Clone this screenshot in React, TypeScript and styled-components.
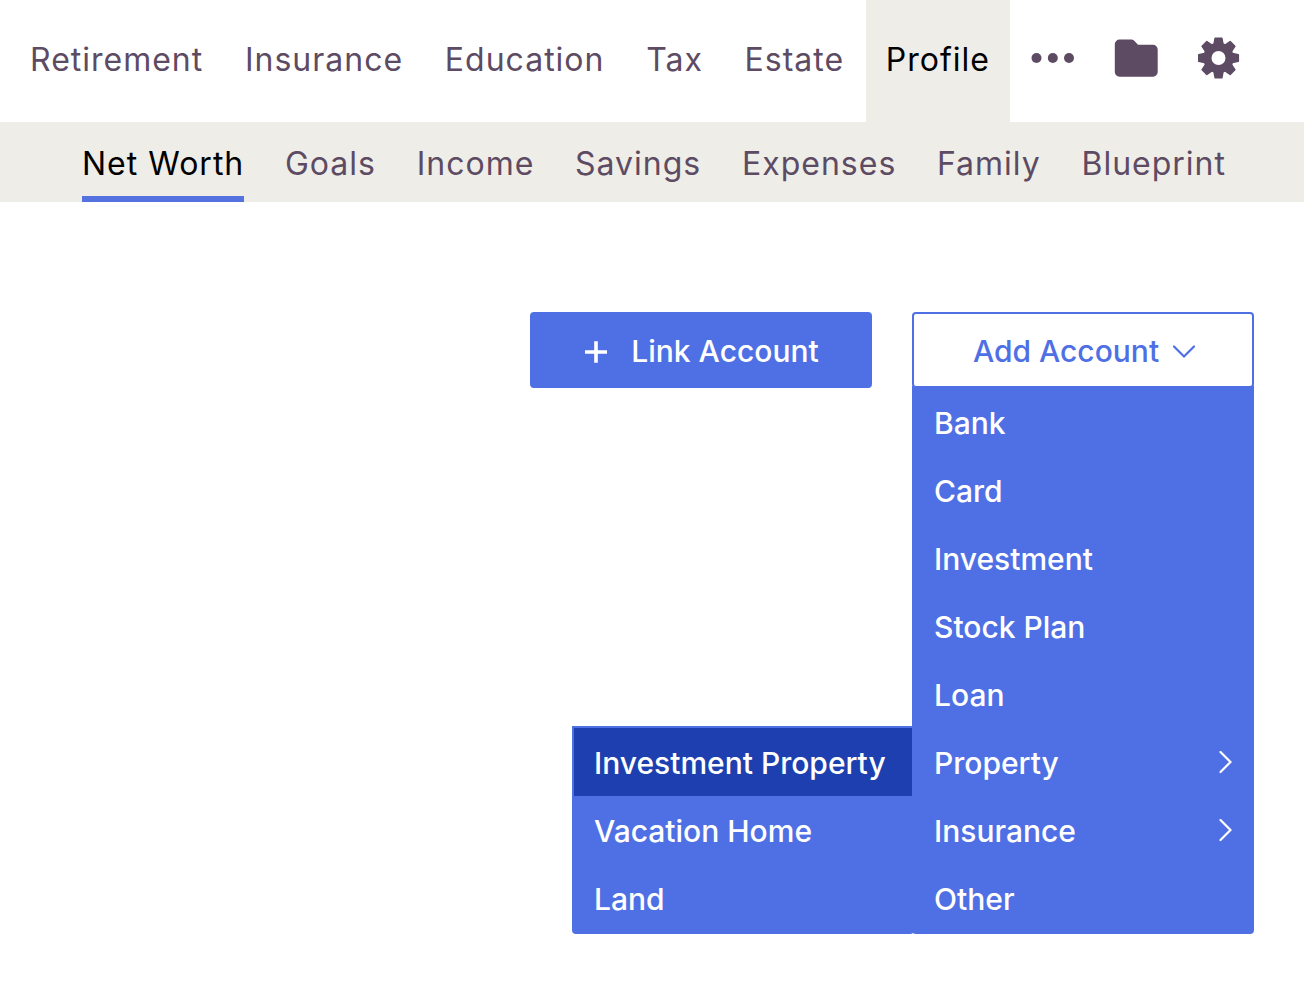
import React from "react";
import styled, { createGlobalStyle } from "styled-components";

const color = {
  plum: "#5d4b63",
  sand: "#eeede8",
  blue: "#4f70e5",
  navy: "#1d3faf",
  underline: "#5573e0",
};

const GlobalStyle = createGlobalStyle`
  *, *::before, *::after { box-sizing: border-box; }
  body {
    margin: 0;
    background: #fff;
    font-family: Inter, "Liberation Sans", Arial, sans-serif;
    font-size: 32px;
    line-height: 40px;
  }
  button { font: inherit; cursor: pointer; }
  ul { list-style: none; margin: 0; padding: 0; }
  svg { display: block; flex: none; }
`;

const PrimaryNav = styled.nav`
  display: flex;
  padding: 0 44px 0 10px;
`;

const PrimaryLinks = styled.div`
  display: flex;
  flex: 1;
  justify-content: space-between;
`;

const PrimaryLink = styled.a<{ $active?: boolean }>`
  padding: 40px 20px 42px;
  letter-spacing: 1px;
  white-space: nowrap;
  text-decoration: none;
  color: ${(p) => (p.$active ? "#000" : color.plum)};
  background: ${(p) => (p.$active ? color.sand : "transparent")};
`;

const NavIconButton = styled.button`
  display: flex;
  align-items: center;
  padding: 0 20px 6px;
  border: 0;
  background: none;
  color: ${color.plum};
`;

const SecondaryNav = styled.nav`
  display: flex;
  justify-content: space-between;
  padding: 0 78px 0 82px;
  background: ${color.sand};
`;

const SecondaryLink = styled.a<{ $active?: boolean }>`
  padding: 22px 0 12px;
  border-bottom: 6px solid ${(p) => (p.$active ? color.underline : "transparent")};
  letter-spacing: 1px;
  white-space: nowrap;
  text-decoration: none;
  color: ${(p) => (p.$active ? "#000" : color.plum)};
`;

const Actions = styled.main`
  display: flex;
  justify-content: flex-end;
  gap: 40px;
  padding: 110px 50px 0;
  min-height: 790px;
  font-size: 30px;
  font-weight: 500;
`;

const ActionButton = styled.button<{ $outlined?: boolean; $gap: number }>`
  display: flex;
  align-items: center;
  justify-content: center;
  gap: ${(p) => p.$gap}px;
  width: 342px;
  height: 76px;
  padding: 2px 0 0 2px;
  border: 2px solid ${color.blue};
  border-radius: 4px;
  white-space: nowrap;
  color: ${(p) => (p.$outlined ? color.blue : "#fff")};
  background: ${(p) => (p.$outlined ? "#fff" : color.blue)};

  svg { margin-top: 2px; }
`;

const Dropdown = styled.div`
  position: relative;
  height: 76px;
`;

const Menu = styled.ul`
  position: absolute;
  top: 100%;
  left: 0;
  width: 100%;
  border: 2px solid ${color.blue};
  border-top: 0;
  border-radius: 0 0 4px 4px;
  background: ${color.blue};

  /* squares off the trigger's lower corners where the two meet */
  &::before {
    content: "";
    position: absolute;
    top: -2px;
    left: -2px;
    right: -2px;
    height: 2px;
    background: ${color.blue};
  }
`;

const Submenu = styled.ul`
  position: absolute;
  top: -2px;
  right: 100%;
  width: 342px;
  border: 2px solid ${color.blue};
  border-radius: 0 0 4px 4px;
  background: ${color.blue};
`;

const MenuEntry = styled.li`
  position: relative;
`;

const MenuButton = styled.button<{ $selected?: boolean }>`
  display: flex;
  align-items: center;
  justify-content: space-between;
  width: 100%;
  height: 68px;
  padding: 2px 20px 0;
  border: 0;
  white-space: nowrap;
  color: #fff;
  background: ${(p) => (p.$selected ? color.navy : "transparent")};
`;

const DotsIcon = () => (
  <svg width="44" height="12" viewBox="0 0 44 12" fill="currentColor" aria-hidden="true">
    <circle cx="6.5" cy="6" r="5" />
    <circle cx="22.8" cy="6" r="5" />
    <circle cx="39" cy="6" r="5" />
  </svg>
);

const FolderIcon = () => (
  <svg width="44" height="38" viewBox="0 0 44 38" fill="currentColor" aria-hidden="true">
    <path d="M5.5 0.5H17C18.5 0.5 19.5 1 20.5 2L24 5.8H39A4.7 4.7 0 0 1 43.7 10.5V33A4.7 4.7 0 0 1 39 37.7H5.5A4.7 4.7 0 0 1 0.8 33V5.2A4.7 4.7 0 0 1 5.5 0.5Z" />
  </svg>
);

const GearIcon = () => (
  <svg width="42" height="42" viewBox="-20.5 -21 42 42" fill="currentColor" aria-hidden="true">
    <circle r="11.1" fill="none" stroke="currentColor" strokeWidth="8.2" />
    {[0, 45, 90, 135, 180, 225, 270, 315].map((angle) => (
      <path
        key={angle}
        transform={`rotate(${angle})`}
        d="M-5.4 -13L-4.1 -19.9Q-4 -20.6 -3.3 -20.6H3.3Q4 -20.6 4.1 -19.9L5.4 -13Z"
      />
    ))}
  </svg>
);

const PlusIcon = () => (
  <svg width="22" height="22" viewBox="0 0 22 22" stroke="currentColor" strokeWidth="3.6" aria-hidden="true">
    <path d="M11 0.3V21.7M0 11H22" />
  </svg>
);

const ChevronDown = () => (
  <svg width="22" height="14" viewBox="0 0 22 14" fill="none" stroke="currentColor" strokeWidth="2.2" strokeLinecap="round" aria-hidden="true">
    <path d="M1 1.5L11 11.5L21 1.5" />
  </svg>
);

const ChevronRight = () => (
  <svg width="14" height="24" viewBox="0 0 14 24" fill="none" stroke="currentColor" strokeWidth="2.2" strokeLinecap="round" aria-hidden="true">
    <path d="M2.5 1L12.5 11L2.5 21" />
  </svg>
);

const primary = ["Retirement", "Insurance", "Education", "Tax", "Estate", "Profile"];
const secondary = ["Net Worth", "Goals", "Income", "Savings", "Expenses", "Family", "Blueprint"];

type Item = { label: string; more?: boolean; children?: string[] };
const accounts: Item[] = [
  { label: "Bank" },
  { label: "Card" },
  { label: "Investment" },
  { label: "Stock Plan" },
  { label: "Loan" },
  { label: "Property", more: true, children: ["Investment Property", "Vacation Home", "Land"] },
  { label: "Insurance", more: true },
  { label: "Other" },
];

export default function App() {
  return (
    <>
      <GlobalStyle />
      <header>
        <PrimaryNav aria-label="Primary">
          <PrimaryLinks>
            {primary.map((label) => (
              <PrimaryLink key={label} href="#" $active={label === "Profile"}>
                {label}
              </PrimaryLink>
            ))}
          </PrimaryLinks>
          <NavIconButton type="button" aria-label="More"><DotsIcon /></NavIconButton>
          <NavIconButton type="button" aria-label="Documents"><FolderIcon /></NavIconButton>
          <NavIconButton type="button" aria-label="Settings"><GearIcon /></NavIconButton>
        </PrimaryNav>
        <SecondaryNav aria-label="Profile">
          {secondary.map((label) => (
            <SecondaryLink key={label} href="#" $active={label === "Net Worth"}>
              {label}
            </SecondaryLink>
          ))}
        </SecondaryNav>
      </header>
      <Actions>
        <ActionButton type="button" $gap={24}>
          <PlusIcon />
          Link Account
        </ActionButton>
        <Dropdown>
          <ActionButton type="button" $outlined $gap={14} aria-haspopup="menu" aria-expanded="true">
            Add Account
            <ChevronDown />
          </ActionButton>
          <Menu role="menu">
            {accounts.map(({ label, more, children }) => (
              <MenuEntry key={label} role="none">
                <MenuButton type="button" role="menuitem" aria-haspopup={more ? "menu" : undefined}>
                  {label}
                  {more && <ChevronRight />}
                </MenuButton>
                {children && (
                  <Submenu role="menu" aria-label={label}>
                    {children.map((child) => (
                      <MenuEntry key={child} role="none">
                        <MenuButton type="button" role="menuitem" $selected={child === "Investment Property"}>
                          {child}
                        </MenuButton>
                      </MenuEntry>
                    ))}
                  </Submenu>
                )}
              </MenuEntry>
            ))}
          </Menu>
        </Dropdown>
      </Actions>
    </>
  );
}
